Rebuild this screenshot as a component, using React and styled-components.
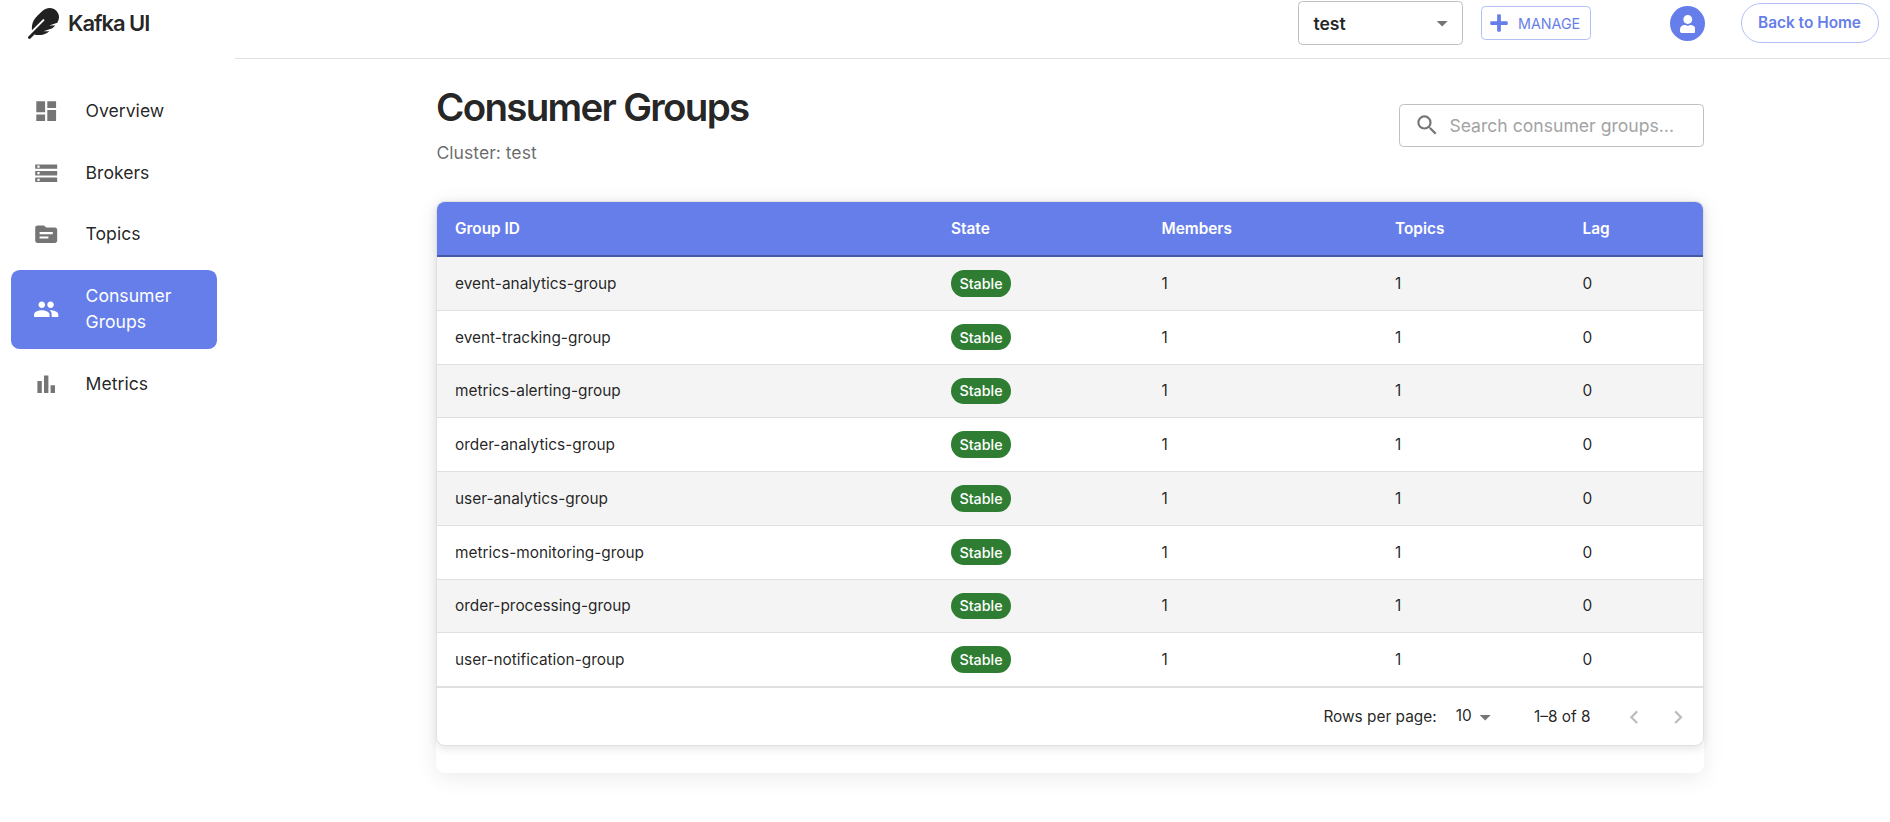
import React from 'react';
import styled, { createGlobalStyle } from 'styled-components';
import {
  MdDashboard,
  MdStorage,
  MdTopic,
  MdPeople,
  MdBarChart,
  MdSearch,
  MdArrowDropDown,
  MdChevronLeft,
  MdChevronRight,
} from 'react-icons/md';
import { FaFeather, FaPlus, FaUser } from 'react-icons/fa';

const GlobalStyle = createGlobalStyle`
  * { box-sizing: border-box; }
  body {
    margin: 0;
    background: #fff;
    color: rgba(0, 0, 0, 0.87);
    font-family: Inter, "Liberation Sans", sans-serif;
    overflow: hidden;
  }
`;

const Page = styled.div`
  display: flex;
  height: 822px;
`;

const Sidebar = styled.aside`
  width: 235px;
  flex-shrink: 0;
`;

const Brand = styled.div`
  display: flex;
  align-items: center;
  gap: 9px;
  height: 46px;
  padding-left: 28px;
  font-size: 22px;
  font-weight: 600;
  letter-spacing: -1.05px;
  svg { width: 31px; height: 31px; }
`;

const Nav = styled.nav`
  display: flex;
  flex-direction: column;
  gap: 8.8px;
  padding: 39px 18px 0 11px;
`;

const NavItem = styled.a`
  display: flex;
  align-items: center;
  padding: 13.2px 22px;
  border-radius: 8.8px;
  font-size: 17.6px;
  line-height: 26.4px;
  background: ${(p) => (p.$active ? '#667eea' : 'transparent')};
  color: ${(p) => (p.$active ? '#fff' : 'inherit')};
  svg {
    width: 26.4px;
    height: 26.4px;
    flex-shrink: 0;
    margin: 0 26.2px 0 0;
    color: ${(p) => (p.$active ? '#fff' : 'rgba(0, 0, 0, 0.54)')};
  }
`;

const Content = styled.div`
  flex: 1;
  min-width: 0;
`;

const TopBar = styled.header`
  display: flex;
  align-items: flex-start;
  justify-content: flex-end;
  height: 59px;
  padding-right: 11px;
  border-bottom: 1px solid #e0e0e0;
`;

const ClusterSelect = styled.button`
  display: flex;
  align-items: center;
  justify-content: space-between;
  width: 165px;
  height: 44px;
  margin: 1px 18px 0 0;
  padding: 0 7px 0 14.4px;
  border: 1px solid #c0c0c0;
  border-radius: 4.4px;
  background: #fff;
  color: inherit;
  font: 600 17.6px Inter, sans-serif;
  svg { width: 26.4px; height: 26.4px; color: rgba(0, 0, 0, 0.54); }
`;

const ManageButton = styled.button`
  display: flex;
  align-items: center;
  gap: 10px;
  width: 110px;
  height: 34px;
  margin: 6px 79px 0 0;
  padding: 1px 0 0 8px;
  border: 1px solid #b3bff5;
  border-radius: 4.4px;
  background: #fff;
  color: #667eea;
  font: 400 14.3px Inter, sans-serif;
  svg { width: 18px; height: 20px; margin-top: -1px; }
`;

const Avatar = styled.div`
  display: flex;
  align-items: center;
  justify-content: center;
  width: 35px;
  height: 35px;
  margin: 6px 36px 0 0;
  border-radius: 50%;
  background: #667eea;
  color: #fff;
  svg { width: 15.6px; height: 18px; }
`;

const HomeButton = styled.button`
  width: 138px;
  height: 40px;
  margin-top: 3px;
  padding: 0 1px 1px 0;
  border: 1px solid #b3bff5;
  border-radius: 20px;
  background: #fff;
  color: #667eea;
  font: 600 15.4px Inter, sans-serif;
`;

const Main = styled.main`
  width: 1268px;
  margin-left: 201px;
`;

const PageHead = styled.div`
  display: flex;
  justify-content: space-between;
  height: 142px;
`;

const Title = styled.h1`
  margin: 25px 0 0;
  font-size: 38.5px;
  line-height: 46px;
  font-weight: 600;
  letter-spacing: -1.7px;
`;

const Subtitle = styled.p`
  margin: 10px 0 0 0.5px;
  font-size: 17.6px;
  line-height: 26.4px;
  color: rgba(0, 0, 0, 0.6);
`;

const SearchBox = styled.label`
  display: flex;
  align-items: center;
  width: 305px;
  height: 43px;
  margin-top: 45px;
  padding-left: 14px;
  border: 1px solid #c0c0c0;
  border-radius: 4.4px;
  svg { width: 26.4px; height: 26.4px; margin: -1px 9px 0 0; color: rgba(0, 0, 0, 0.54); flex-shrink: 0; }
`;

const SearchInput = styled.input`
  flex: 1;
  min-width: 0;
  padding: 0;
  border: 0;
  outline: 0;
  background: transparent;
  font: 400 17.6px Inter, sans-serif;
  &::placeholder { color: #a3a3a3; opacity: 1; }
`;

const OuterCard = styled.section`
  height: 572px;
  border-radius: 8.8px;
  background: #fff;
  box-shadow: 0 4.4px 22px rgba(0, 0, 0, 0.08);
`;

const Paper = styled.div`
  border: 1px solid #e0e0e0;
  border-radius: 8.8px;
  background: #fff;
  box-shadow: 0 2.2px 8.8px rgba(0, 0, 0, 0.1);
  overflow: hidden;
`;

const Table = styled.table`
  width: 100%;
  table-layout: fixed;
  border-collapse: separate;
  border-spacing: 0;
  font-size: 15.4px;
`;

const HeadCell = styled.th`
  width: ${(p) => p.$width};
  height: 55px;
  padding: 0 17.6px 0 18px;
  border-bottom: 2px solid #4758a4;
  background: #667eea;
  color: #fff;
  font-weight: 600;
  text-align: left;
`;

const Row = styled.tr`
  background: ${(p) => (p.$striped ? '#f4f4f4' : '#fff')};
`;

const Cell = styled.td`
  height: 53.75px;
  padding: 0 17.6px 0 18px;
  border-bottom: 1px solid #e0e0e0;
`;

const Chip = styled.span`
  display: flex;
  align-items: center;
  justify-content: center;
  width: 60px;
  height: 26.4px;
  border-radius: 13.2px;
  background: #2e7d32;
  color: #fff;
  font-size: 14.3px;
  font-weight: 500;
`;

const Pagination = styled.footer`
  display: flex;
  align-items: center;
  justify-content: flex-end;
  height: 58px;
  padding: 0 11.5px 0 0;
  border-top: 1px solid #e0e0e0;
  font-size: 15.4px;
`;

const PageSize = styled.span`
  display: flex;
  align-items: center;
  margin: 0 36px 0 19px;
  > span { margin-top: -2px; }
  svg { width: 26.4px; height: 26.4px; margin-top: 1px; color: rgba(0, 0, 0, 0.54); }
`;

const Pager = styled.span`
  display: flex;
  gap: 17.6px;
  margin-left: 30.5px;
  color: rgba(0, 0, 0, 0.26);
  svg { width: 26.4px; height: 26.4px; margin-top: 1px; display: block; }
`;

const navigation = [
  { label: 'Overview', Icon: MdDashboard },
  { label: 'Brokers', Icon: MdStorage },
  { label: 'Topics', Icon: MdTopic },
  { label: 'Consumer Groups', Icon: MdPeople, active: true },
  { label: 'Metrics', Icon: MdBarChart },
];

const columns = [
  { label: 'Group ID', width: '496px' },
  { label: 'State', width: '210.5px' },
  { label: 'Members', width: '233.5px' },
  { label: 'Topics', width: '187.5px' },
  { label: 'Lag', width: '138.5px' },
];

const groups = [
  'event-analytics-group',
  'event-tracking-group',
  'metrics-alerting-group',
  'order-analytics-group',
  'user-analytics-group',
  'metrics-monitoring-group',
  'order-processing-group',
  'user-notification-group',
].map((id) => ({ id, state: 'Stable', members: 1, topics: 1, lag: 0 }));

export default function App() {
  return (
    <>
      <GlobalStyle />
      <Page>
        <Sidebar>
          <Brand>
            <FaFeather />
            <span>Kafka UI</span>
          </Brand>
          <Nav>
            {navigation.map(({ label, Icon, active }) => (
              <NavItem key={label} $active={active}>
                <Icon />
                <span>{label}</span>
              </NavItem>
            ))}
          </Nav>
        </Sidebar>
        <Content>
          <TopBar>
            <ClusterSelect>
              <span>test</span>
              <MdArrowDropDown />
            </ClusterSelect>
            <ManageButton>
              <FaPlus />
              <span>MANAGE</span>
            </ManageButton>
            <Avatar>
              <FaUser />
            </Avatar>
            <HomeButton>Back to Home</HomeButton>
          </TopBar>
          <Main>
            <PageHead>
              <div>
                <Title>Consumer Groups</Title>
                <Subtitle>Cluster: test</Subtitle>
              </div>
              <SearchBox>
                <MdSearch />
                <SearchInput placeholder="Search consumer groups..." />
              </SearchBox>
            </PageHead>
            <OuterCard>
              <Paper>
                <Table>
                  <thead>
                    <tr>
                      {columns.map((c) => (
                        <HeadCell key={c.label} $width={c.width}>{c.label}</HeadCell>
                      ))}
                    </tr>
                  </thead>
                  <tbody>
                    {groups.map((g, i) => (
                      <Row key={g.id} $striped={i % 2 === 0}>
                        <Cell>{g.id}</Cell>
                        <Cell><Chip>{g.state}</Chip></Cell>
                        <Cell>{g.members}</Cell>
                        <Cell>{g.topics}</Cell>
                        <Cell>{g.lag}</Cell>
                      </Row>
                    ))}
                  </tbody>
                </Table>
                <Pagination>
                  <span>Rows per page:</span>
                  <PageSize>
                    <span>10</span>
                    <MdArrowDropDown />
                  </PageSize>
                  <span>1–8 of 8</span>
                  <Pager>
                    <MdChevronLeft />
                    <MdChevronRight />
                  </Pager>
                </Pagination>
              </Paper>
            </OuterCard>
          </Main>
        </Content>
      </Page>
    </>
  );
}
